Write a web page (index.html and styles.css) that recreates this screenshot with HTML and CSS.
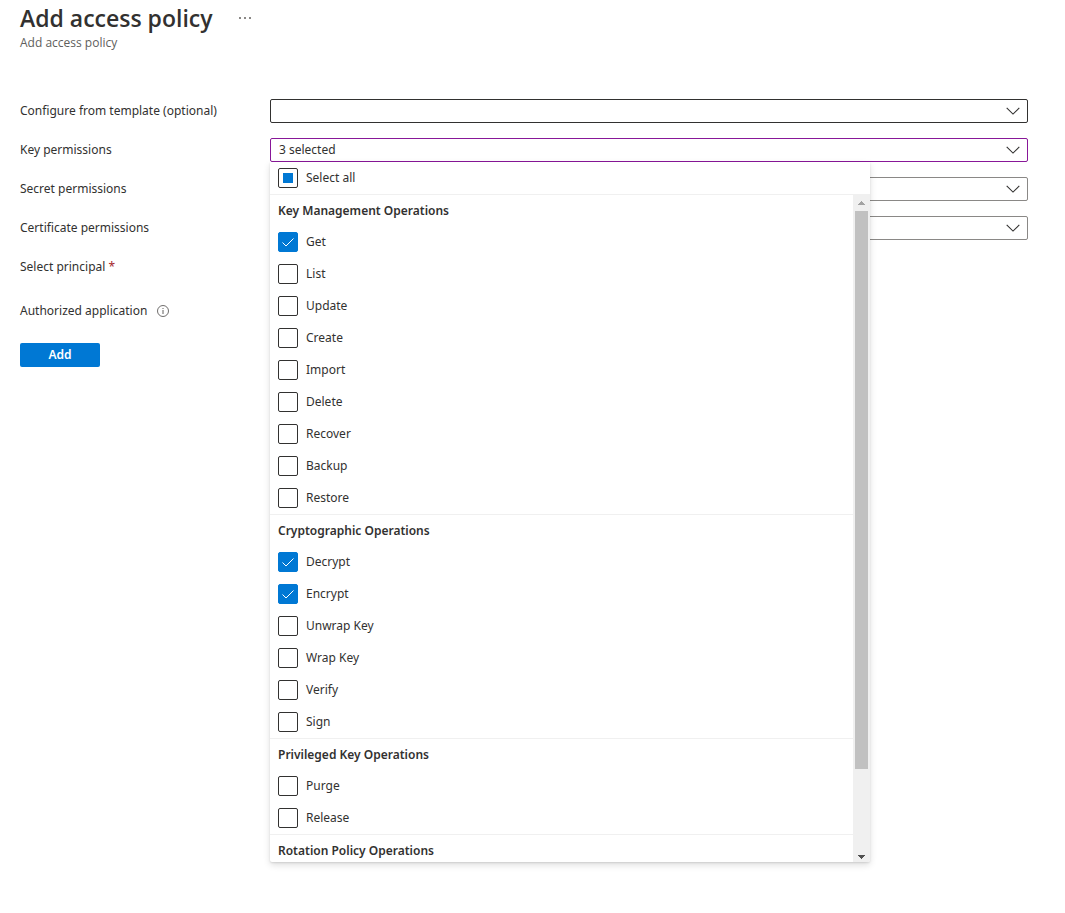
FILE: index.html
```
<!DOCTYPE html>
<html lang="en">
<head>
<meta charset="utf-8">
<title>Add access policy</title>
<link rel="stylesheet" href="styles.css">
</head>
<body>
<svg class="defs" aria-hidden="true">
  <symbol id="chevron" viewBox="0 0 14 8"><path d="M.7.9 7 7.1 13.3.9" fill="none" stroke="#323130" stroke-width="1.1"/></symbol>
</svg>
<main class="page">
  <header class="header">
    <div class="title-row">
      <h1 class="title">Add access policy</h1>
      <button class="more" type="button" aria-label="More actions">
        <svg width="12" height="2" viewBox="0 0 12 2"><path d="M0 0h2v2H0zM5 0h2v2H5zM10 0h2v2h-2z" fill="#8a8886"/></svg>
      </button>
    </div>
    <p class="subtitle">Add access policy</p>
  </header>

  <form class="form">
    <div class="field">
      <label class="label" for="template">Configure from template (optional)</label>
      <div class="control">
        <select class="select select-dark" id="template"><option></option></select>
        <svg class="chevron"><use href="#chevron"/></svg>
      </div>
    </div>
    <div class="field">
      <label class="label" for="keys">Key permissions</label>
      <div class="control">
        <select class="select select-active" id="keys"><option>3 selected</option></select>
        <svg class="chevron"><use href="#chevron"/></svg>
        <div class="menu">
          <label class="option"><input class="check check-mixed" type="checkbox">Select all</label>
          <div class="menu-body">
            <div class="groups">
              <section class="group">
                <h2 class="group-title">Key Management Operations</h2>
                <label class="option"><input class="check" type="checkbox" checked>Get</label>
                <label class="option"><input class="check" type="checkbox">List</label>
                <label class="option"><input class="check" type="checkbox">Update</label>
                <label class="option"><input class="check" type="checkbox">Create</label>
                <label class="option"><input class="check" type="checkbox">Import</label>
                <label class="option"><input class="check" type="checkbox">Delete</label>
                <label class="option"><input class="check" type="checkbox">Recover</label>
                <label class="option"><input class="check" type="checkbox">Backup</label>
                <label class="option"><input class="check" type="checkbox">Restore</label>
              </section>
              <section class="group">
                <h2 class="group-title">Cryptographic Operations</h2>
                <label class="option"><input class="check" type="checkbox" checked>Decrypt</label>
                <label class="option"><input class="check" type="checkbox" checked>Encrypt</label>
                <label class="option"><input class="check" type="checkbox">Unwrap Key</label>
                <label class="option"><input class="check" type="checkbox">Wrap Key</label>
                <label class="option"><input class="check" type="checkbox">Verify</label>
                <label class="option"><input class="check" type="checkbox">Sign</label>
              </section>
              <section class="group">
                <h2 class="group-title">Privileged Key Operations</h2>
                <label class="option"><input class="check" type="checkbox">Purge</label>
                <label class="option"><input class="check" type="checkbox">Release</label>
              </section>
              <section class="group">
                <h2 class="group-title">Rotation Policy Operations</h2>
              </section>
            </div>
            <div class="scrollbar" aria-hidden="true">
              <svg class="arrow" viewBox="0 0 17 17"><path d="M8 7h1v1h1v1h1v1h1v1H5v-1h1V9h1V8h1z" fill="#a3a3a3"/></svg>
              <div class="track"><div class="thumb"></div></div>
              <svg class="arrow" viewBox="0 0 17 17"><path d="M5 10h7v1h-1v1h-1v1H9v1H8v-1H7v-1H6v-1H5z" fill="#505050"/></svg>
            </div>
          </div>
        </div>
      </div>
    </div>
    <div class="field">
      <label class="label" for="secrets">Secret permissions</label>
      <div class="control">
        <select class="select" id="secrets"><option></option></select>
        <svg class="chevron"><use href="#chevron"/></svg>
      </div>
    </div>
    <div class="field">
      <label class="label" for="certs">Certificate permissions</label>
      <div class="control">
        <select class="select" id="certs"><option></option></select>
        <svg class="chevron"><use href="#chevron"/></svg>
      </div>
    </div>
    <div class="field field-last">
      <span class="label">Select principal <span class="required">*</span></span>
    </div>
    <div class="field field-last">
      <span class="label">Authorized application<svg class="info" viewBox="0 0 12 12"><circle cx="6" cy="6" r="5.5" fill="none" stroke="#605e5c" stroke-width=".9"/><path d="M6 5v4M6 3v1" stroke="#605e5c"/></svg></span>
    </div>
    <button class="submit" type="button">Add</button>
  </form>
</main>
</body>
</html>
```
FILE: styles.css
```
* { box-sizing: border-box; }
body {
  margin: 0;
  background: #fff;
  color: #323130;
  font: 12px/20px "Noto Sans", "Open Sans", sans-serif;
}
.defs { position: absolute; width: 0; height: 0; }
.page { min-height: 100vh; padding: 2px 37px 20px 20px; }
.header { margin-bottom: 47px; }
.title-row { display: flex; align-items: center; gap: 26px; }
.title { margin: 0; font: 600 23px/32px "Open Sans", "Noto Sans", sans-serif; }
.more { display: flex; padding: 0; border: 0; background: none; }
.subtitle { margin: 0; font: 12px/18px "Open Sans", "Noto Sans", sans-serif; color: #605e5c; }

.form { display: flex; flex-direction: column; }
.field { display: flex; align-items: center; min-height: 24px; margin-bottom: 15px; }
.field-last { margin-bottom: 20px; }
.label { display: flex; align-items: center; flex: 0 0 250px; white-space: pre; }
.required { color: #a4262c; }
.info { width: 12px; height: 12px; margin-left: 10px; }

.control { position: relative; flex: 1; }
.select {
  display: block;
  width: 100%;
  height: 24px;
  padding: 0 30px 0 8px;
  border: 1px solid #8a8886;
  border-radius: 2px;
  background: #fff;
  color: inherit;
  font: inherit;
  appearance: none;
}
.select-dark { border-color: #323130; }
.select-active { border-color: #881798; }
.chevron { position: absolute; top: 8px; right: 8px; width: 14px; height: 8px; pointer-events: none; }

.menu {
  position: absolute;
  top: 100%;
  left: 0;
  z-index: 1;
  display: flex;
  flex-direction: column;
  width: 600px;
  height: 700px;
  overflow: hidden;
  border-radius: 0 0 2px 2px;
  background: #fff;
  box-shadow: 0 3px 7px rgba(0, 0, 0, .13), 0 1px 2px rgba(0, 0, 0, .11);
}
.menu-body { display: flex; flex: 1; min-height: 0; }
.groups { flex: 1; overflow: hidden; }
.group-title {
  margin: 0;
  height: 32px;
  padding: 0 8px;
  border-top: 1px solid #f0f0f0;
  font-size: 12px;
  line-height: 32px;
  font-weight: 600;
}
.option { display: flex; flex: none; align-items: center; gap: 8px; height: 32px; padding: 0 8px; }
.check {
  display: grid;
  place-items: center;
  flex: none;
  width: 20px;
  height: 20px;
  margin: 0;
  border: 1px solid #323130;
  border-radius: 2px;
  background: #fff;
  appearance: none;
}
.check:checked { border-color: #0078d4; background: #0078d4 url("data:image/svg+xml,%3Csvg xmlns='http://www.w3.org/2000/svg' viewBox='0 0 18 18'%3E%3Cpath d='M3.5 9.5 7 13 14.5 5.5' fill='none' stroke='white'/%3E%3C/svg%3E") center / 18px 18px no-repeat; }
.check-mixed::before { content: ""; width: 10px; height: 10px; background: #0078d4; }

.scrollbar { display: flex; flex-direction: column; flex: 0 0 17px; background: #f0f0f0; }
.arrow { width: 17px; height: 17px; }
.track { flex: 1; padding: 0 2px; }
.thumb { height: 88%; background: #c1c1c1; }

.submit {
  width: 80px;
  height: 24px;
  padding: 0;
  border: 0;
  border-radius: 2px;
  background: #0078d4;
  color: #fff;
  font: 600 12px/24px "Noto Sans", "Open Sans", sans-serif;
}
```
